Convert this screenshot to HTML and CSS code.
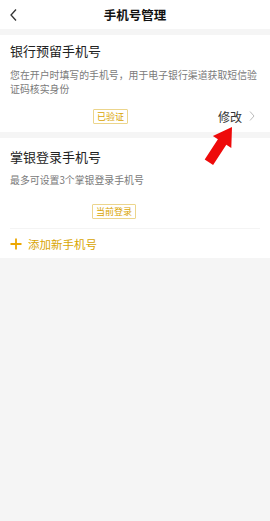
FILE: index.html
```html
<!DOCTYPE html>
<html lang="zh">
  <head>
    <meta charset="UTF-8" />
    <meta name="viewport" content="width=device-width, initial-scale=1.0" />
    <title>手机号管理</title>
    <link rel="stylesheet" href="styles.css">
  </head>
  <body>
    <header class="topbar">
      <span class="back">
        <svg width="10" height="14" viewBox="0 0 10 14"><path d="M7 1.5 L2 7 L7 12.5" fill="none" stroke="#333" stroke-width="1.3"/></svg>
      </span>
      <div class="title">手机号管理</div>
      <span></span>
    </header>

    <section class="card card-bank">
      <div class="card-title">银行预留手机号</div>
      <p class="card-desc">您在开户时填写的手机号，用于电子银行渠道获取短信验证码核实身份</p>
      <div class="row">
        <span class="badge">已验证</span>
        <span class="edit">修改
          <svg width="8" height="12" viewBox="0 0 8 12"><path d="M2 1.5 L6 6 L2 10.5" fill="none" stroke="#bbb" stroke-width="1"/></svg>
        </span>
      </div>
    </section>

    <section class="card card-login">
      <div class="card-title">掌银登录手机号</div>
      <p class="card-desc">最多可设置3个掌银登录手机号</p>
      <div class="row row-login">
        <span class="badge">当前登录</span>
      </div>
      <div class="add">
        <svg width="12" height="12" viewBox="0 0 12 12"><path d="M6 0.5 V11.5 M0.5 6 H11.5" stroke="#eca700" stroke-width="1.8"/></svg>
        <span>添加新手机号</span>
      </div>
    </section>

    <svg class="arrow" width="50" height="44" viewBox="0 0 50 44">
      <polygon points="33,3 32.3,24 27.3,20.8 14.1,40.9 5.7,35.4 18.9,15.3 13.9,12" fill="#ee0a0a"/>
    </svg>
  </body>
</html>
```

FILE: styles.css
```css
:root {
  --bg: #f5f5f5;
  --text: #222222;
  --muted: #7a7a7a;
  --gold: #d9a400;
  --gold-light: #ecd58c;
  font-family: "Noto Sans CJK SC", "Noto Sans", sans-serif;
}

body {
  margin: 0;
  min-height: 100vh;
  background-color: var(--bg);
  color: var(--text);
  position: relative;
}

.topbar {
  height: 29px;
  background-color: #ffffff;
  display: grid;
  grid-template-columns: 40px 1fr 40px;
  align-items: center;
}

.back {
  display: flex;
  padding-left: 9px;
}

.title {
  text-align: center;
  font-size: 12.5px;
  font-weight: bold;
  color: #111;
}

.card {
  background-color: #ffffff;
  padding: 0 10px;
  margin-top: 6px;
}

.card-title {
  font-size: 13px;
  line-height: 20px;
  color: #222;
}

.card-desc {
  margin: 0;
  font-size: 9.9px;
  line-height: 14px;
  color: var(--muted);
}

.card-bank {
  padding-top: 6px;
}

.card-bank .card-desc {
  margin-top: 7px;
}

.row {
  display: flex;
  align-items: center;
  height: 32px;
  margin-top: 4px;
}

.badge {
  margin-left: 83px;
  font-size: 9px;
  line-height: 13px;
  padding: 0 3px;
  color: var(--gold);
  border: 1px solid var(--gold-light);
  border-radius: 1px;
}

.edit {
  margin-left: auto;
  display: flex;
  align-items: center;
  gap: 6px;
  font-size: 12px;
  color: #333;
  padding-right: 4px;
}

.card-login {
  padding-top: 9px;
}

.card-login .card-desc {
  margin-top: 6px;
}

.row-login {
  height: auto;
  margin-top: 0;
  padding: 17px 0 9px;
  border-bottom: 1px solid #f4f4f4;
}

.row-login .badge {
  margin-left: 82px;
}

.add {
  display: flex;
  align-items: center;
  gap: 6px;
  height: 29px;
  font-size: 11.5px;
  color: var(--gold);
}

.arrow {
  position: absolute;
  left: 199px;
  top: 124px;
}
```
